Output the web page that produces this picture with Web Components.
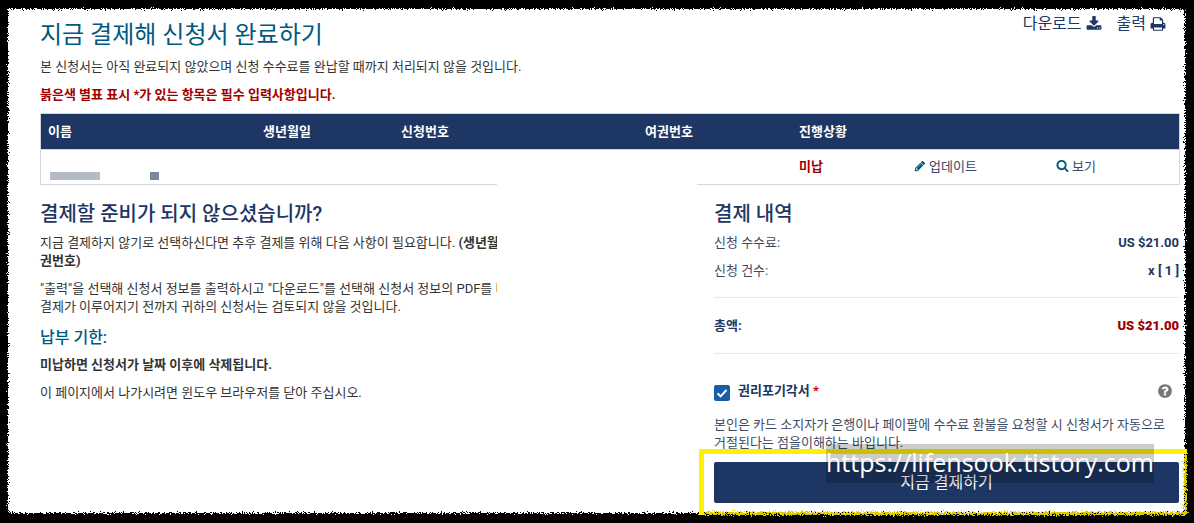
<!DOCTYPE html>
<html lang="ko">
<head>
<meta charset="utf-8">
<title>지금 결제해 신청서 완료하기</title>
<style>
  body { margin: 0; background: #000; font-family: Roboto, "Noto Sans CJK KR", sans-serif; }
</style>
</head>
<body>
<pay-page>
  <pay-header slot="header">
    <span slot="title">지금 결제해 신청서 완료하기</span>
  </pay-header>
  <applicant-table slot="table"></applicant-table>
  <notice-panel slot="left"></notice-panel>
  <fee-summary slot="right"></fee-summary>
</pay-page>

<script>
const ICONS = {
  download: 'M1344 1344q0-26-19-45t-45-19-45 19-19 45 19 45 45 19 45-19 19-45zm256 0q0-26-19-45t-45-19-45 19-19 45 19 45 45 19 45-19 19-45zm128-224v320q0 40-28 68t-68 28h-1472q-40 0-68-28t-28-68v-320q0-40 28-68t68-28h465l135 136q58 56 136 56t136-56l136-136h464q40 0 68 28t28 68zm-325-569q17 41-14 70l-448 448q-18 19-45 19t-45-19l-448-448q-31-29-14-70 17-39 59-39h256v-448q0-26 19-45t45-19h256q26 0 45 19t19 45v448h256q42 0 59 39z',
  print: 'M448 1536h896v-256h-896v256zm0-640h896v-384h-160q-40 0-68-28t-28-68v-160h-640v640zm1152 64q0-26-19-45t-45-19-45 19-19 45 19 45 45 19 45-19 19-45zm128 0v416q0 13-9.5 22.5t-22.5 9.5h-224v160q0 40-28 68t-68 28h-960q-40 0-68-28t-28-68v-160h-224q-13 0-22.5-9.5t-9.5-22.5v-416q0-79 56.5-135.5t135.5-56.5h64v-544q0-40 28-68t68-28h672q40 0 88 20t76 48l152 152q28 28 48 76t20 88v256h64q79 0 135.5 56.5t56.5 135.5z',
  pencil: 'M491 1536l91-91-235-235-91 91v107h128v128h107zm523-928q0-22-22-22-10 0-17 7l-542 542q-7 7-7 17 0 22 22 22 10 0 17-7l542-542q7-7 7-17zm-54-192l416 416-832 832h-416v-416zm683 96q0 53-37 90l-166 166-416-416 166-165q36-38 90-38 53 0 91 38l235 234q37 39 37 91z',
  search: 'M1216 832q0-185-131.5-316.5t-316.5-131.5-316.5 131.5-131.5 316.5 131.5 316.5 316.5 131.5 316.5-131.5 131.5-316.5zm512 832q0 52-38 90t-90 38q-54 0-90-38l-343-342q-179 124-399 124-143 0-273.5-55.5t-225-150-150-225-55.5-273.5 55.5-273.5 150-225 225-150 273.5-55.5 273.5 55.5 225 150 150 225 55.5 273.5q0 220-124 399l343 343q37 37 37 90z',
  question: 'M1024 1376v-192q0-14-9-23t-23-9h-192q-14 0-23 9t-9 23v192q0 14 9 23t23 9h192q14 0 23-9t9-23zm256-672q0-88-55.5-163t-138.5-116-170-41q-243 0-371 213-15 24 8 42l132 100q7 6 19 6 16 0 25-12 53-68 86-92 34-24 86-24 48 0 85.5 26t37.5 59q0 38-20 61t-68 45q-63 28-115.5 86.5t-52.5 125.5v36q0 14 9 23t23 9h192q14 0 23-9t9-23q0-19 21.5-49.5t54.5-49.5q32-18 49-28.5t46-35 44.5-48 28-60.5 12.5-81zm384 192q0 209-103 385.5t-279.5 279.5-385.5 103-385.5-103-279.5-279.5-103-385.5 103-385.5 279.5-279.5 385.5-103 385.5 103 279.5 279.5 103 385.5z'
}

class FaIcon extends HTMLElement {
  connectedCallback() {
    const size = this.getAttribute('size') || 14
    this.attachShadow({ mode: 'open' })
    this.shadowRoot.innerHTML = `
      <style>
        :host { display: inline-flex; flex: none; }
        svg { fill: currentColor; display: block; }
      </style>
      <svg width="${size}" height="${size}" viewBox="0 0 1792 1792"><path d="${ICONS[this.getAttribute('name')]}"/></svg>`
  }
}

class PayPage extends HTMLElement {
  constructor() {
    super()
    this.attachShadow({ mode: 'open' })
    this.shadowRoot.innerHTML = `
      <style>
        :host { display: block; position: relative; width: 1194px; height: 523px; overflow: hidden; background: #000; color: #333; }
        .edge { position: absolute; left: 8px; top: 9px; width: 1177px; height: 504px; background: #fff; filter: url(#torn); border-radius: 0 6px 0 0; }
        .sheet { position: relative; display: flex; flex-direction: column; box-sizing: border-box; height: 523px; padding: 18px 14px 0 40px; }
        .cols { display: grid; grid-template-columns: 650px 1fr; column-gap: 24px; padding-right: 1px; }
        .cover { position: absolute; left: 497px; top: 152px; width: 200px; height: 250px; background: #fff; }
        .mark { position: absolute; background: #b4bbc3; top: 172px; height: 8px; left: 50px; width: 50px; }
        .mark.dark { background: #7a8a9a; left: 150px; width: 9px; }
        .frame, .rough { position: absolute; left: 699px; top: 449px; width: 488px; height: 66px; box-sizing: border-box; border: solid #fff200; }
        .frame { border-width: 5px 0 0 5px; }
        .rough { border-width: 0 3px 3px 0; border-color: #d8cc00; filter: url(#torn); }
        .stamp { position: absolute; left: 826px; top: 444px; width: 328px; height: 39px; background: rgba(0,0,0,.2); color: #fff;
                 font: 25px/36px "Open Sans", sans-serif; text-align: center; white-space: nowrap; }
      </style>
      <svg width="0" height="0" style="position:absolute">
        <filter id="torn" x="-2%" y="-2%" width="104%" height="104%">
          <feTurbulence type="fractalNoise" baseFrequency="0.9" numOctaves="2" seed="4"/>
          <feDisplacementMap in="SourceGraphic" scale="7" xChannelSelector="R" yChannelSelector="G"/>
          <feGaussianBlur stdDeviation="0.5"/>
        </filter>
      </svg>
      <div class="edge"></div>
      <div class="sheet">
        <slot name="header"></slot>
        <slot name="table"></slot>
        <div class="cols">
          <slot name="left"></slot>
          <slot name="right"></slot>
        </div>
      </div>
      <div class="cover"></div>
      <div class="mark"></div>
      <div class="mark dark"></div>
      <div class="rough"></div>
      <div class="frame"></div>
      <div class="stamp">https://lifensook.tistory.com</div>`
  }
}

class PayHeader extends HTMLElement {
  constructor() {
    super()
    this.attachShadow({ mode: 'open' })
    this.shadowRoot.innerHTML = `
      <style>
        :host { display: block; }
        .top { display: flex; justify-content: space-between; align-items: flex-start; height: 40px; }
        h1 { margin: 0; font-size: 24px; line-height: 34px; font-weight: 400; color: #005a7f; }
        .links { display: flex; gap: 15px; margin: -5px 14px 0 0; padding-top: 2px; color: #1d3663; font-size: 16px; line-height: 18px; }
        .links span { display: flex; align-items: center; gap: 4px; }
        p { margin: 0 0 10px; font-size: 13px; line-height: 18px; }
        .req { margin: 0; color: #a00000; font-weight: 700; height: 27px; }
      </style>
      <div class="top">
        <h1><slot name="title"></slot></h1>
        <div class="links">
          <span>다운로드 <fa-icon name="download" size="16"></fa-icon></span>
          <span>출력 <fa-icon name="print" size="16"></fa-icon></span>
        </div>
      </div>
      <p>본 신청서는 아직 완료되지 않았으며 신청 수수료를 완납할 때까지 처리되지 않을 것입니다.</p>
      <p class="req">붉은색 별표 표시 *가 있는 항목은 필수 입력사항입니다.</p>`
  }
}

class ApplicantTable extends HTMLElement {
  constructor() {
    super()
    this.attachShadow({ mode: 'open' })
    this.shadowRoot.innerHTML = `
      <style>
        :host { display: block; font-size: 13px; color: #1d3663; }
        .row { display: grid; grid-template-columns: 215px 138px 244px 154px 115px 142px 1fr; align-items: center; padding-left: 7px; box-sizing: border-box; }
        .head { height: 37px; background: #1d3663; color: #fff; font-weight: 700; border: 1px solid #d4d6da; padding-bottom: 3px; }
        .body { height: 35px; border: 1px solid #d4d6da; border-top: 0; padding-bottom: 3px; }
        .due { color: #a00000; font-weight: 700; }
        .act { display: flex; align-items: center; gap: 3px; color: #36486b; }
        fa-icon { color: #005a7f; }
      </style>
      <div class="row head">
        <span>이름</span><span>생년월일</span><span>신청번호</span><span>여권번호</span><span>진행상황</span>
      </div>
      <div class="row body">
        <span></span><span></span><span></span><span></span>
        <span class="due">미납</span>
        <span class="act"><fa-icon name="pencil" size="12"></fa-icon>업데이트</span>
        <span class="act"><fa-icon name="search" size="13"></fa-icon>보기</span>
      </div>`
  }
}

class NoticePanel extends HTMLElement {
  constructor() {
    super()
    this.attachShadow({ mode: 'open' })
    this.shadowRoot.innerHTML = `
      <style>
        :host { display: block; font-size: 13px; line-height: 18px; padding-top: 15px; color: #333; }
        h2 { margin: 0 0 6px; font-size: 20px; line-height: 28px; font-weight: 500; color: #1d3663; }
        h3 { margin: 0 0 6px; font-size: 16px; line-height: 24px; font-weight: 500; color: #005a7f; }
        p { margin: 0 0 10px; }
        .wrap { width: 548px; }
      </style>
      <h2>결제할 준비가 되지 않으셨습니까?</h2>
      <p class="wrap">지금 결제하지 않기로 선택하신다면 추후 결제를 위해 다음 사항이 필요합니다. <b>(생년월일, 신청번호, 여권번호)</b></p>
      <p>"출력"을 선택해 신청서 정보를 출력하시고 "다운로드"를 선택해 신청서 정보의 PDF를 다운로드 하십시오.<br>결제가 이루어지기 전까지 귀하의 신청서는 검토되지 않을 것입니다.</p>
      <h3>납부 기한:</h3>
      <p><b>미납하면 신청서가 날짜 이후에 삭제됩니다.</b></p>
      <p>이 페이지에서 나가시려면 윈도우 브라우저를 닫아 주십시오.</p>`
  }
}

class FeeSummary extends HTMLElement {
  constructor() {
    super()
    this.attachShadow({ mode: 'open' })
    this.shadowRoot.innerHTML = `
      <style>
        :host { display: block; font-size: 13px; line-height: 18px; padding-top: 15px; color: #3c4a66; }
        h2 { margin: 0 0 6px; font-size: 20px; line-height: 28px; font-weight: 500; color: #1d3663; }
        .line { display: flex; justify-content: space-between; height: 28px; }
        .line b { color: #1d3663; }
        .line.total { height: 57px; align-items: center; color: #1d3663; font-weight: 700; border-top: 1px solid #e8e8e8; border-bottom: 1px solid #e8e8e8; margin-top: 7px; box-sizing: border-box; }
        .line.total b { color: #a00000; }
        .waive { display: flex; align-items: flex-start; gap: 8px; margin-top: 28px; color: #1d3663; font-weight: 700; }
        .box { width: 16px; height: 16px; border-radius: 2px; background: #1a5ea8; color: #fff; margin-top: 3px; display: flex; align-items: center; justify-content: center; flex: none; }
        .star { color: #d00000; }
        .help { margin-left: auto; margin-right: 6px; color: #777; margin-top: 1px; }
        p { margin: 15px 0 10px; }
        button { display: block; width: 100%; height: 41px; background: #1d3663; color: #fff; border: 0; border-radius: 2px; padding: 0; font: 16px/20px Roboto, "Noto Sans CJK KR", sans-serif; }
      </style>
      <h2>결제 내역</h2>
      <div class="line"><span>신청 수수료:</span><b>US $21.00</b></div>
      <div class="line"><span>신청 건수:</span><b>x [ 1 ]</b></div>
      <div class="line total"><span>총액:</span><b>US $21.00</b></div>
      <div class="waive">
        <span class="box"><svg width="12" height="12" viewBox="0 0 12 12"><path d="M1.5 6.3 4.6 9.4 10.5 3" fill="none" stroke="currentColor" stroke-width="2"/></svg></span>
        <span>권리포기각서 <span class="star">*</span></span>
        <fa-icon class="help" name="question" size="16"></fa-icon>
      </div>
      <p>본인은 카드 소지자가 은행이나 페이팔에 수수료 환불을 요청할 시 신청서가 자동으로 거절된다는 점을이해하는 바입니다.</p>
      <button>지금 결제하기</button>`
  }
}

customElements.define('fa-icon', FaIcon)
customElements.define('pay-page', PayPage)
customElements.define('pay-header', PayHeader)
customElements.define('applicant-table', ApplicantTable)
customElements.define('notice-panel', NoticePanel)
customElements.define('fee-summary', FeeSummary)
</script>
</body>
</html>
